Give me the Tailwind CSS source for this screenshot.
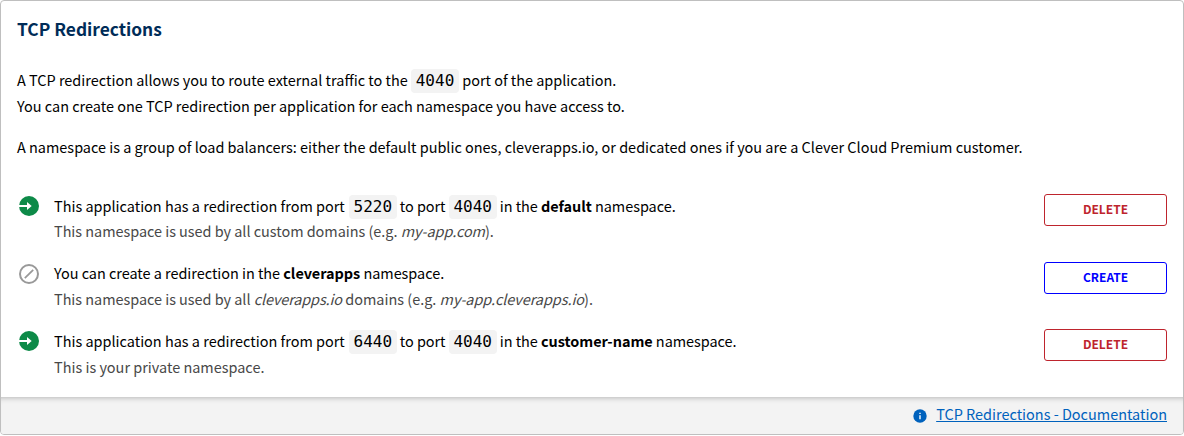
<!DOCTYPE html>
<html lang="en">
<head>
<meta charset="utf-8">
<title>TCP Redirections</title>
<script src="https://cdn.jsdelivr.net/npm/@tailwindcss/browser@4"></script>
</head>
<body class="bg-white">
<section class="flex h-[435px] w-full flex-col overflow-hidden rounded border border-[#bfbfbf] bg-white font-['Noto_Sans_CJK_SC','Open_Sans',sans-serif] text-[14.46px] leading-[26px] text-black">
  <div class="flex h-[396px] shrink-0 flex-col px-4 pt-[15px]">
    <h1 class="h-[26px] text-[17.35px] font-bold leading-[26px] text-[#002c58]">TCP Redirections</h1>
    <div class="mt-[25px] whitespace-nowrap">
      <p class="h-[26px]">A TCP redirection allows you to route external traffic to the <code class="rounded bg-[#f3f3f3] px-[4.75px] pt-[2px] pb-[3px] font-['DejaVu_Sans_Mono'] text-base">4040</code><span class="tracking-[-0.02px]"> port of the application.</span></p>
      <p class="h-[26px]">You can create one TCP redirection per application for each namespace you have access to.</p>
      <p class="mt-[15px] h-[26px]">A namespace is a group of load balancers: either the default public ones, cleverapps.io, or dedicated ones if you are a Clever Cloud Premium customer.</p>
    </div>
    <ul class="mt-[34px] flex flex-col gap-4 whitespace-nowrap">
      <li class="flex h-[52px] items-start">
        <svg class="mt-0.5 ml-0.5 size-5 shrink-0" viewBox="0 0 20 20"><circle cx="10" cy="10" r="10" fill="#0d8a48"/><path d="M0 9.1h8V6l4.7 4L8 14v-3.1H0z" fill="#fff"/></svg>
        <div class="-mt-px ml-[15px] grow">
          <p class="h-[25px]">This application has a redirection from port <code class="ml-px rounded bg-[#f3f3f3] px-[4.5px] pt-[2px] pb-[3px] font-['DejaVu_Sans_Mono'] text-base">5220</code><span class="tracking-[-0.04px]"> to port <code class="rounded bg-[#f3f3f3] px-[4.75px] pt-[2px] pb-[3px] font-['DejaVu_Sans_Mono'] text-base">4040</code> in the <strong>default</strong> namespace.</span></p>
          <p class="h-[26px] text-[#484848] tracking-[-0.03px]">This namespace is used by all custom domains (e.g. <em class="tracking-[-0.05px]">my-app.com</em>).</p>
        </div>
        <button class="h-8 w-[123px] rounded-[3px] border border-[#be242d] pb-0.5 text-[12px] font-bold leading-none text-[#be242d]">DELETE</button>
      </li>
      <li class="flex h-[51px] items-start">
        <svg class="mt-0.5 ml-0.5 size-5 shrink-0" viewBox="0 0 20 20" fill="none" stroke="#999"><circle cx="10" cy="10" r="9" stroke-width="2"/><path d="M5.8 14.2l8.4-8.4" stroke-width="1.8"/></svg>
        <div class="-mt-0.5 ml-[15px] grow">
          <p class="h-[26px] tracking-[-0.03px]">You can create a redirection in the <strong>cleverapps</strong> namespace.</p>
          <p class="h-[26px] text-[#484848] tracking-[-0.03px]">This namespace is used by all <em class="tracking-[-0.12px]">cleverapps.io</em><span class="tracking-normal"> domains (e.g. </span><em class="tracking-[-0.05px]">my-app.cleverapps.io</em>).</p>
        </div>
        <button class="h-8 w-[123px] rounded-[3px] border border-[#0000ff] pb-0.5 text-[12px] font-bold leading-none text-[#0000ff]">CREATE</button>
      </li>
      <li class="flex h-[52px] items-start">
        <svg class="mt-0.5 ml-0.5 size-5 shrink-0" viewBox="0 0 20 20"><circle cx="10" cy="10" r="10" fill="#0d8a48"/><path d="M0 9.1h8V6l4.7 4L8 14v-3.1H0z" fill="#fff"/></svg>
        <div class="-mt-px ml-[15px] grow">
          <p class="h-[26px]">This application has a redirection from port <code class="ml-px rounded bg-[#f3f3f3] px-[4.5px] pt-[2px] pb-[3px] font-['DejaVu_Sans_Mono'] text-base">6440</code><span class="tracking-[-0.04px]"> to port <code class="rounded bg-[#f3f3f3] px-[4.75px] pt-[2px] pb-[3px] font-['DejaVu_Sans_Mono'] text-base">4040</code> in the <strong>customer-name</strong> namespace.</span></p>
          <p class="h-[26px] text-[#484848]">This is your private namespace.</p>
        </div>
        <button class="h-8 w-[123px] rounded-[3px] border border-[#be242d] pb-0.5 text-[12px] font-bold leading-none text-[#be242d]">DELETE</button>
      </li>
    </ul>
  </div>
  <footer class="flex grow items-center justify-end gap-[9px] bg-[#f3f3f3] px-4 shadow-[inset_0_6px_6px_-6px_#a4a4a4] text-[#0062bd]">
    <svg class="mt-px size-3.5" viewBox="0 0 14 14"><circle cx="7" cy="7" r="6.7" fill="#0062bd"/><path d="M6.3 3.7h1.4v1.4H6.3zM6.3 6.3h1.4v4H6.3z" fill="#fff"/></svg>
    <a href="#" class="mb-[3px] underline decoration-1 underline-offset-1">TCP Redirections - Documentation</a>
  </footer>
</section>
</body>
</html>
